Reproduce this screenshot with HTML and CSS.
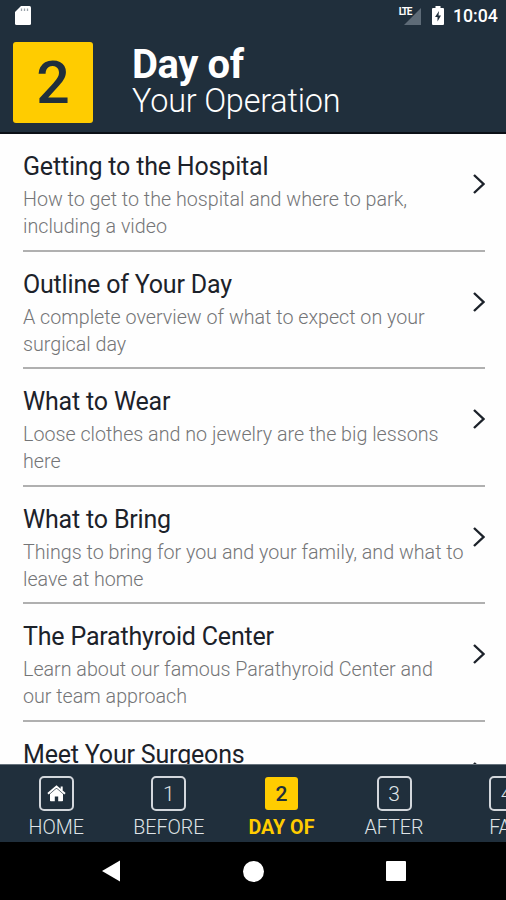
FILE: index.html
```html
<!DOCTYPE html>
<html lang="en">
<head>
<meta charset="utf-8">
<title>Day of Your Operation</title>
<link rel="stylesheet" href="styles.css">
</head>
<body>
<div class="phone">
  <div class="status">
    <svg class="sd" width="16" height="19" viewBox="0 0 16 19"><path d="M6 0h8.500q1.500 0 1.500 1.500v16q0 1.500-1.500 1.500h-13q-1.500 0-1.500-1.500V6z" fill="#fff"/><path d="M6.500 2.500v2.500M9.500 2.500v2.500M12.500 2.500v2.500" stroke="#9aa3aa" stroke-width="1.300"/></svg>
    <div class="signal"><span class="lte">LTE</span><svg width="17" height="17" viewBox="0 0 17 17"><path d="M17 0v17H0z" fill="#5e6b77"/></svg></div>
    <svg class="battery" width="12" height="19" viewBox="0 0 12 19"><path d="M3.500 0h5v2H11q1 0 1 1v15q0 1-1 1H1q-1 0-1-1V3q0-1 1-1h2.500z" fill="#fff"/><path d="M7 5L3 11h2.500v4.500L9 9.500H6.500z" fill="#202f3c"/></svg>
    <span class="clock">10:04</span>
  </div>
  <header class="header">
    <div class="badge">2</div>
    <div class="heading"><h1>Day of</h1><p>Your Operation</p></div>
  </header>
  <main class="list">
    <section class="row"><div class="copy"><h2>Getting to the Hospital</h2><p>How to get to the hospital and where to park,<br>including a video</p></div><svg class="chevron" viewBox="0 0 12 20"><path d="M1 1l9.500 9L1 19"/></svg></section>
    <section class="row"><div class="copy"><h2>Outline of Your Day</h2><p>A complete overview of what to expect on your<br>surgical day</p></div><svg class="chevron" viewBox="0 0 12 20"><path d="M1 1l9.500 9L1 19"/></svg></section>
    <section class="row"><div class="copy"><h2>What to Wear</h2><p>Loose clothes and no jewelry are the big lessons<br>here</p></div><svg class="chevron" viewBox="0 0 12 20"><path d="M1 1l9.500 9L1 19"/></svg></section>
    <section class="row"><div class="copy"><h2>What to Bring</h2><p>Things to bring for you and your family, and what to<br>leave at home</p></div><svg class="chevron" viewBox="0 0 12 20"><path d="M1 1l9.500 9L1 19"/></svg></section>
    <section class="row"><div class="copy"><h2>The Parathyroid Center</h2><p>Learn about our famous Parathyroid Center and<br>our team approach</p></div><svg class="chevron" viewBox="0 0 12 20"><path d="M1 1l9.500 9L1 19"/></svg></section>
    <section class="row last"><div class="copy"><h2>Meet Your Surgeons</h2></div><svg class="chevron" viewBox="0 0 12 20"><path d="M1 1l9.500 9L1 19"/></svg></section>
  </main>
  <nav class="tabs">
    <div class="tab"><span class="box"><svg width="19" height="17" viewBox="0 0 19 17"><path d="M9.500 3.500L16 9v6.500q0 .8-.8.8h-4V11.500H7.800v4.800h-4q-.8 0-.8-.8V9z" fill="#fff"/><path d="M1 8.800l8.500-7.300L18 8.800M14.700 1.500V6" fill="none" stroke="#fff" stroke-width="2"/></svg></span><span class="label">HOME</span></div>
    <div class="tab"><span class="box">1</span><span class="label">BEFORE</span></div>
    <div class="tab active"><span class="box">2</span><span class="label">DAY OF</span></div>
    <div class="tab"><span class="box">3</span><span class="label">AFTER</span></div>
    <div class="tab"><span class="box">4</span><span class="label">FAQ</span></div>
  </nav>
  <footer class="system">
    <svg width="18" height="22" viewBox="0 0 18 22"><path d="M18 .5v21L0 11z"/></svg>
    <svg width="21" height="21" viewBox="0 0 21 21"><circle cx="10.500" cy="10.500" r="10.500"/></svg>
    <svg width="20" height="20" viewBox="0 0 20 20"><rect width="20" height="20" rx="1"/></svg>
  </footer>
</div>
</body>
</html>
```
FILE: styles.css
```css
* { box-sizing: border-box; margin: 0; }
body { background: #000; font-family: Roboto, "Liberation Sans", sans-serif; overflow: hidden; }
.phone { width: 506px; height: 900px; display: flex; flex-direction: column; overflow: hidden; }
.status { height: 32px; flex: none; background: #202f3c; display: flex; align-items: flex-start; padding: 6px 8px 0 15px; }
.signal { display: flex; align-items: flex-start; margin-left: auto; height: 19px; }
.signal svg { margin: 2px 0 0 -7px; }
.lte { color: #fff; font-size: 10px; line-height: 11px; font-weight: 700; letter-spacing: -1.300px; position: relative; }
.battery { margin-left: 11px; }
.clock { width: 45px; margin-left: 9px; color: #fff; font-size: 17.700px; line-height: 21px; font-weight: 500; white-space: nowrap; }
.header { height: 102px; flex: none; background: #202f3c; border-bottom: 2px solid #0b1016; display: flex; padding: 10px 13px 0; }
.badge { width: 80px; height: 81px; background: #fc0; border-radius: 3px; color: #202f3c; font-size: 59px; line-height: 82px; font-weight: 500; text-align: center; }
.heading { margin-left: 39px; color: #fff; white-space: nowrap; }
.heading h1 { font-size: 40px; line-height: 45px; font-weight: 700; letter-spacing: -.4px; }
.heading p { font-size: 32.400px; line-height: 28px; font-weight: 300; letter-spacing: -.2px; }
.list { flex: 1; min-height: 0; overflow: hidden; background: #fefefe; padding: 0 21px 0 23px; }
.row { height: 117.500px; border-bottom: 2px solid #b0b0b0; display: flex; justify-content: space-between; white-space: nowrap; }
.copy { padding-top: 17px; }
.copy h2 { color: #1c222a; font-size: 25px; line-height: 32px; font-weight: 400; letter-spacing: -.18px; }
.copy p { color: #747577; font-size: 19.700px; line-height: 27px; font-weight: 300; margin-top: 3px; }
.chevron { width: 12px; height: 20px; flex: none; margin-top: 40px; fill: none; stroke: #1c222a; stroke-width: 2.400; }
.tabs { height: 78px; flex: none; background: #202f3c; border-top: 1px solid #65717b; display: flex; overflow: hidden; }
.tab { width: 112.600px; flex: none; display: flex; flex-direction: column; align-items: center; padding-top: 11px; color: #dfe3e7; }
.box { width: 35px; height: 35px; border: 2px solid #d3d7dc; border-radius: 5px; display: flex; align-items: center; justify-content: center; font-size: 21px; font-weight: 300; }
.label { font-size: 19.700px; line-height: 24px; margin-top: 5px; font-weight: 300; white-space: nowrap; }
.active { color: #fc0; }
.active .box { width: 33px; height: 33px; margin: 1px; background: #fc0; color: #202f3c; border: 0; border-radius: 3px; font-weight: 500; }
.active .label { font-weight: 700; }
.system { height: 58px; flex: none; background: #000; display: flex; align-items: center; justify-content: space-between; padding: 0 100px 0 102px; }
.system svg { fill: #fff; }
```
